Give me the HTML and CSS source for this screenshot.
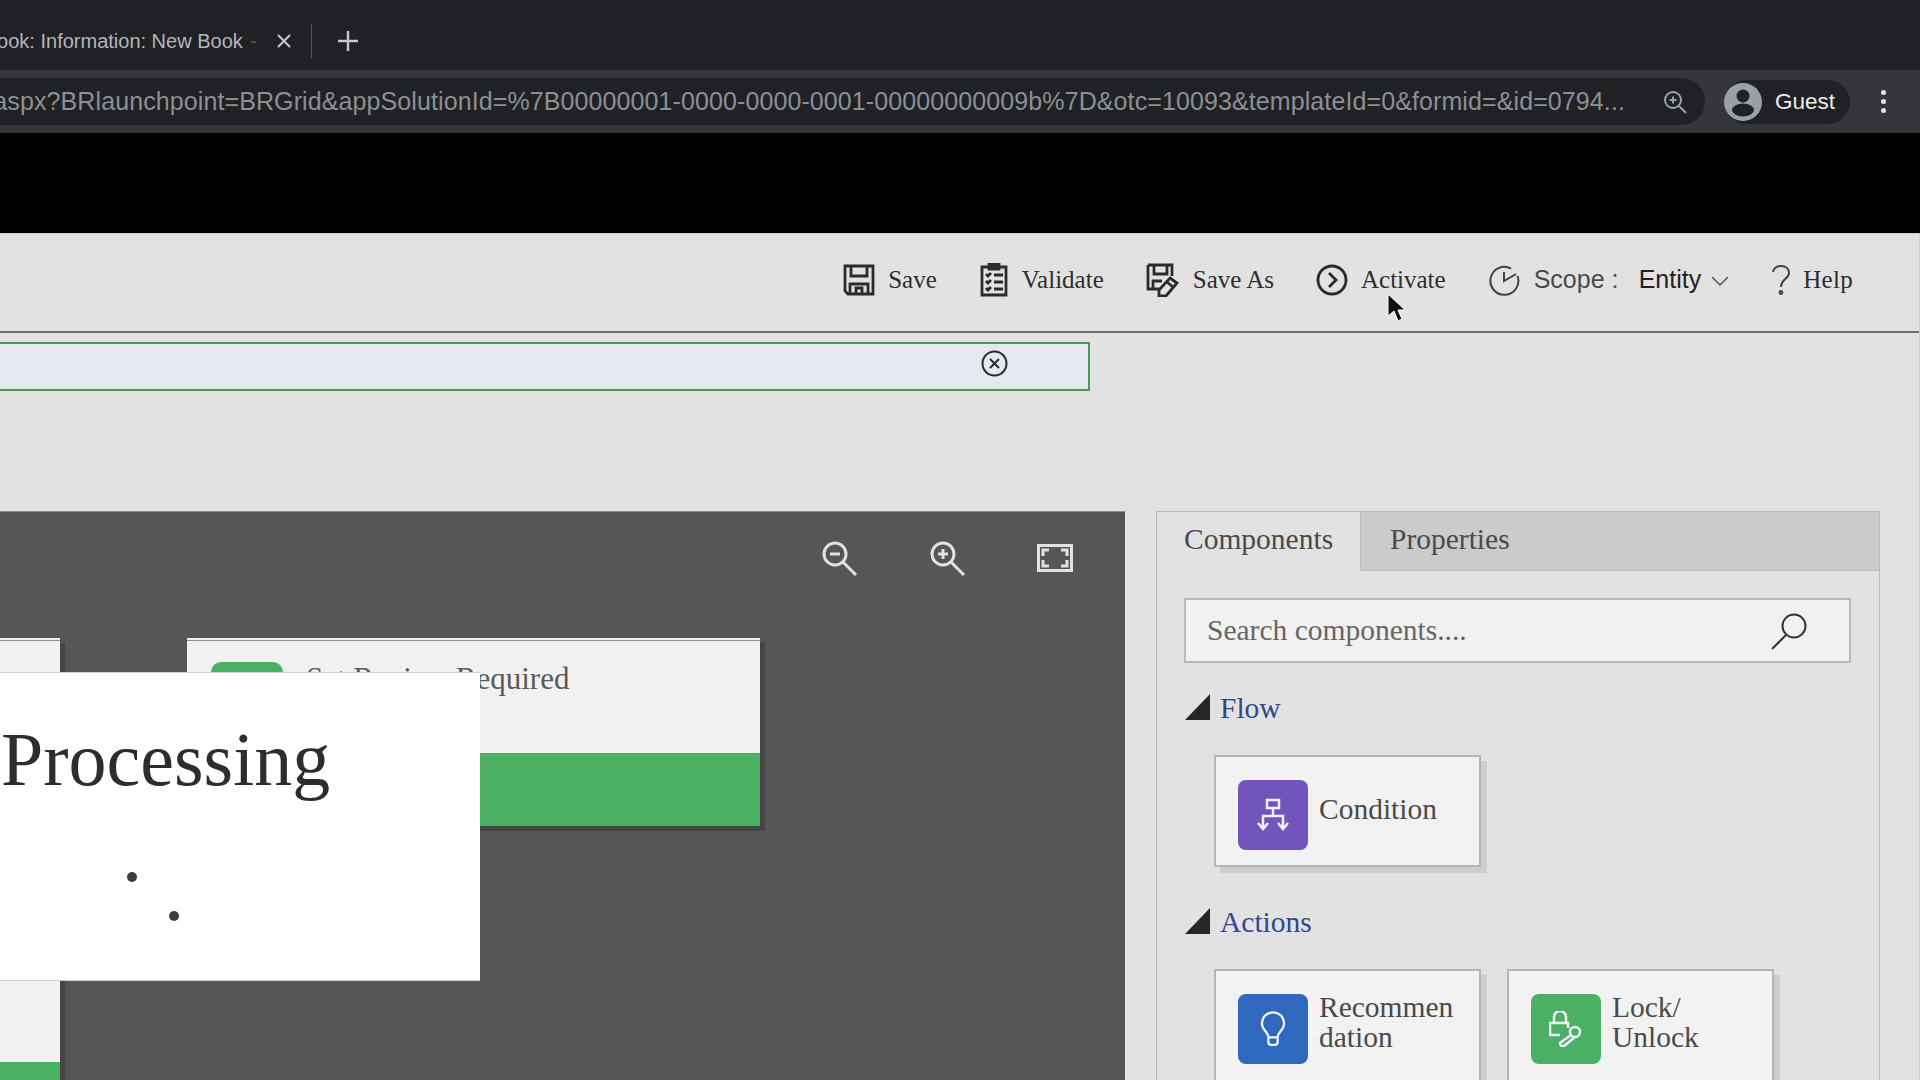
FILE: index.html
```html
<!DOCTYPE html>
<html lang="en">

<head>
    <meta charset="UTF-8">
    <title>Information: New Book</title>
    <link rel="stylesheet" href="styles.css">
</head>

<body>
    <!-- browser chrome -->
    <div class="tabstrip">
        <div class="tab-title"><span>New Book: Information: New Book <em>-</em></span></div>
        <svg class="tab-close" width="16" height="16" viewBox="0 0 16 16"><path d="M2 2l12 12M14 2L2 14" /></svg>
        <div class="tab-divider"></div>
        <svg class="tab-new" width="22" height="22" viewBox="0 0 22 22"><path d="M11 1v20M1 11h20" /></svg>
    </div>
    <div class="browser-bar">
        <div class="url-pill">
            <div class="url-text"><span>main.aspx?BRlaunchpoint=BRGrid&amp;appSolutionId=%7B00000001-0000-0000-0001-00000000009b%7D&amp;otc=10093&amp;templateId=0&amp;formid=&amp;id=0794...</span></div>
            <svg class="url-zoom" width="26" height="26" viewBox="0 0 26 26">
                <circle cx="11" cy="11" r="8" />
                <path d="M17 17l7 7M11 7.5v7M7.5 11h7" />
            </svg>
        </div>
        <div class="profile">
            <svg width="38" height="38" viewBox="0 0 38 38">
                <circle cx="19" cy="19" r="19" fill="#9aa0a6" />
                <circle cx="19" cy="13" r="6.5" fill="#202124" />
                <ellipse cx="19" cy="27" rx="11" ry="6.5" fill="#202124" />
            </svg>
            <span>Guest</span>
        </div>
        <div class="kebab"><i></i><i></i><i></i></div>
    </div>
    <div class="black-band"></div>

    <div class="app">
        <div class="command-bar">
            <div class="command">
                <svg class="cmd-icon" width="32" height="32" viewBox="0 0 32 32">
                    <path d="M2 2h28v28H5l-3-3zM8 2v10h16V2M7 30V20h18v10M13 30v-6h6v6" />
                </svg>
                <span>Save</span>
            </div>
            <div class="command">
                <svg class="cmd-icon" width="30" height="34" viewBox="0 0 30 34">
                    <path d="M3 4h24v28H3zM10 1h10v5H10zM7 11l2 2 3-3M7 18l2 2 3-3M7 25l2 2 3-3M15 12h9M15 19h9M15 26h9" />
                </svg>
                <span>Validate</span>
            </div>
            <div class="command">
                <svg class="cmd-icon" width="34" height="34" viewBox="0 0 34 34">
                    <path d="M2 2h24v11M2 2v24h12M8 2v9h13V2M7 26v-8h9M24 15l7 5-11 13-7 0 0-6zM21 19l6 5" />
                </svg>
                <span>Save As</span>
            </div>
            <div class="command">
                <svg class="cmd-icon" width="32" height="32" viewBox="0 0 32 32">
                    <circle cx="16" cy="16" r="14" />
                    <path d="M13 9l7 7-7 7" />
                </svg>
                <span>Activate</span>
            </div>
            <div class="command scope">
                <svg class="cmd-icon thin" width="32" height="32" viewBox="0 0 32 32">
                    <path d="M23 4.5A14 14 0 1 0 29.5 12M16 8v9l12-7" />
                </svg>
                <span class="scope-label">Scope :</span>
                <span class="scope-value">Entity</span>
                <svg class="chevron" width="18" height="10" viewBox="0 0 18 10"><path d="M1 1l8 8 8-8" /></svg>
            </div>
            <div class="command help">
                <svg class="help-mark" width="20" height="30" viewBox="0 0 20 30">
                    <path d="M2 7c1-4 4-6 8-6 5 0 8 3 8 7 0 6-8 6-8 14" />
                    <circle cx="10" cy="27.5" r="1.4" />
                </svg>
                <span>Help</span>
            </div>
        </div>

        <div class="notice-row">
            <div class="notice">
                <svg class="notice-close" width="27" height="27" viewBox="0 0 27 27">
                    <circle cx="13.5" cy="13.5" r="12" />
                    <path d="M9 9l9 9M18 9l-9 9" />
                </svg>
            </div>
        </div>

        <div class="workspace">
            <div class="canvas">
                <div class="canvas-tools">
                    <svg width="36" height="36" viewBox="0 0 36 36">
                        <circle cx="14" cy="14" r="11" />
                        <path d="M22 22l13 13M9 14h10" />
                    </svg>
                    <svg width="36" height="36" viewBox="0 0 36 36">
                        <circle cx="14" cy="14" r="11" />
                        <path d="M22 22l13 13M9 14h10M14 9v10" />
                    </svg>
                    <svg width="36" height="28" viewBox="0 0 36 28">
                        <path d="M1.5 1.5h33v25h-33zM6 12V6h6M24 6h6v6M30 16v6h-6M12 22H6v-6" />
                    </svg>
                </div>

                <div class="node node-left">
                    <div class="node-band"></div>
                </div>
                <div class="node node-right">
                    <div class="node-head">
                        <div class="node-icon"></div>
                        <span>Set Review Required</span>
                    </div>
                    <div class="node-band"></div>
                </div>

                <div class="processing">
                    <h1>Processing</h1>
                    <i class="dot dot-one"></i>
                    <i class="dot dot-two"></i>
                </div>
            </div>

            <div class="panel">
                <div class="panel-tabs">
                    <div class="panel-tab active">Components</div>
                    <div class="panel-tab">Properties</div>
                </div>
                <div class="panel-body">
                    <div class="search-box">
                        <span>Search components....</span>
                        <svg width="38" height="38" viewBox="0 0 38 38">
                            <circle cx="25" cy="14" r="11.5" />
                            <path d="M17 23L3 37" />
                        </svg>
                    </div>

                    <div class="group-title"><i class="triangle"></i><span>Flow</span></div>
                    <div class="tiles">
                        <div class="tile">
                            <div class="tile-icon purple">
                                <svg width="32" height="34" viewBox="0 0 32 34">
                                    <path d="M10 2h12v8H10zM16 10v8M6 30V18h20v12M1 25l5 6 5-6M21 25l5 6 5-6" />
                                </svg>
                            </div>
                            <span class="tile-text single">Condition</span>
                        </div>
                    </div>

                    <div class="group-title actions"><i class="triangle"></i><span>Actions</span></div>
                    <div class="tiles">
                        <div class="tile tall">
                            <div class="tile-icon blue">
                                <svg width="26" height="38" viewBox="0 0 28 38">
                                    <path d="M9 28c0-6-7-8-7-15a12 12 0 0 1 24 0c0 7-7 9-7 15zM9 28v5a3 3 0 0 0 3 3h4a3 3 0 0 0 3-3v-5" />
                                </svg>
                            </div>
                            <span class="tile-text">Recommen<br>dation</span>
                        </div>
                        <div class="tile tall">
                            <div class="tile-icon green">
                                <svg width="34" height="36" viewBox="0 0 34 36">
                                    <path d="M19 17V12H1v12h10M5 12V6a6 6 0 0 1 12 0v6M22 24L11 32l1 3 3 0 11-9" />
                                    <circle cx="26" cy="21" r="5" />
                                </svg>
                            </div>
                            <span class="tile-text">Lock/<br>Unlock</span>
                        </div>
                    </div>
                </div>
            </div>
        </div>

        <svg class="cursor" width="18" height="29" viewBox="0 0 18 29">
            <path d="M1 1v22l6-5 4 10 4-2-4-9h7z" />
        </svg>
    </div>
</body>

</html>
```

FILE: styles.css
```css
html,
body {
    margin: 0;
    padding: 0;
    height: 1080px;
    overflow: hidden;
    background: #e2e2e2;
    font-family: "Liberation Serif", serif;
}

/* browser chrome */
.tabstrip {
    display: flex;
    align-items: center;
    height: 70px;
    box-sizing: border-box;
    padding-top: 12px;
    background: #202124;
}

.tab-title {
    display: flex;
    justify-content: flex-end;
    width: 257px;
    overflow: hidden;
    white-space: nowrap;
    color: #b4b6b8;
    font-family: "Liberation Sans", sans-serif;
    font-size: 20px;
}

.tab-title span {
    flex: none;
}

.tab-title em {
    margin-left: 2px;
    color: #55575a;
    font-style: normal;
}

.tab-close {
    margin-left: 19px;
    fill: none;
    stroke: #c4c6c8;
    stroke-width: 2;
}

.tab-divider {
    width: 1px;
    height: 34px;
    margin-left: 19px;
    background: #55575a;
}

.tab-new {
    margin-left: 25px;
    fill: none;
    stroke: #c4c6c8;
    stroke-width: 2.5;
}

.browser-bar {
    display: flex;
    align-items: center;
    height: 63px;
    background: #35363a;
}

.url-pill {
    display: flex;
    align-items: center;
    flex: none;
    width: 1705px;
    height: 47px;
    box-sizing: border-box;
    background: #202124;
    border-radius: 0 24px 24px 0;
}

.url-text {
    display: flex;
    justify-content: flex-end;
    width: 1625px;
    overflow: hidden;
    white-space: nowrap;
    color: #8d8f92;
    font-family: "Liberation Sans", sans-serif;
    font-size: 25px;
    letter-spacing: 0.1px;
}

.url-text span {
    flex: none;
}

.url-zoom {
    margin-left: 37px;
    fill: none;
    stroke: #9aa0a6;
    stroke-width: 2;
}

.profile {
    display: flex;
    align-items: center;
    width: 126px;
    height: 44px;
    margin-left: 19px;
    background: #202124;
    border-radius: 22px;
    color: #e8eaed;
    font-family: "Liberation Sans", sans-serif;
    font-size: 22.5px;
}

.profile span {
    margin-left: 13px;
}

.kebab {
    display: flex;
    flex-direction: column;
    gap: 4px;
    margin-left: 31px;
}

.kebab i {
    display: block;
    width: 5px;
    height: 5px;
    border-radius: 50%;
    background: #dfe1e4;
}

.black-band {
    height: 100px;
    background: #000;
}

/* page */
.app {
    position: relative;
    height: 847px;
    border-right: 1px solid #cfcfcf;
    border-top: 1px solid #d0d0d0;
    box-sizing: border-box;
}

.command-bar {
    display: flex;
    justify-content: flex-end;
    align-items: center;
    gap: 42px;
    height: 99px;
    box-sizing: border-box;
    padding: 0 66px 6px 0;
    border-bottom: 2px solid #6f6f6f;
    color: #2e2e2e;
    font-size: 25px;
}

.command {
    display: flex;
    align-items: center;
    gap: 13px;
}

.cmd-icon {
    fill: none;
    stroke: #2b2b2b;
    stroke-width: 2.8;
}

.cmd-icon.thin {
    stroke: #444;
    stroke-width: 2;
}

.scope {
    font-family: "Liberation Sans", sans-serif;
    font-size: 25px;
    gap: 14px;
}

.scope-label {
    color: #4a4a4a;
    width: 91px;
}

.scope-value {
    color: #222;
}

.chevron {
    margin: 2px 0 0 -4px;
    fill: none;
    stroke: #555;
    stroke-width: 1.5;
}

.help {
    margin-left: 0;
    gap: 12px;
}

.help span {
    letter-spacing: 0.3px;
}

.help-mark {
    fill: none;
    stroke: #444;
    stroke-width: 2;
}

.notice-row {
    padding-top: 9px;
    height: 178px;
    box-sizing: border-box;
}

.notice {
    display: flex;
    justify-content: flex-end;
    width: 1092px;
    height: 49px;
    box-sizing: border-box;
    padding: 6px 80px 0 0;
    margin-left: -2px;
    background: #e6e8f0;
    border: 2px solid #4d9a58;
}

.notice-close {
    fill: none;
    stroke: #2b2b2b;
    stroke-width: 2;
}

.workspace {
    display: flex;
    gap: 31px;
    height: 569px;
    padding-right: 39px;
}

/* canvas */
.canvas {
    position: relative;
    width: 1125px;
    flex: none;
    overflow: hidden;
    background: #565656;
    border-top: 1px solid #8b8b8b;
    box-sizing: border-box;
}

.canvas-tools {
    position: absolute;
    top: 28px;
    left: 821px;
    display: flex;
    align-items: center;
    gap: 72px;
}

.canvas-tools svg {
    fill: none;
    stroke: #e2e2e2;
    stroke-width: 3;
}

.node {
    position: absolute;
    display: flex;
    flex-direction: column;
    background: #f1f1f1;
    border-top: 3px solid #f1f1f1;
    box-shadow: 5px 5px 0 #454545;
}

.node::before {
    content: "";
    position: absolute;
    left: 0;
    right: 0;
    top: -1px;
    height: 1px;
    background: #8f8f8f;
}

.node-left {
    top: 126px;
    left: -20px;
    width: 80px;
    height: 560px;
}

.node-left .node-band {
    flex: none;
    margin-top: 421px;
    height: 140px;
}

.node-right {
    top: 126px;
    left: 187px;
    width: 573px;
    height: 185px;
}

.node-head {
    display: flex;
    gap: 23px;
    height: 112px;
    box-sizing: border-box;
    padding: 21px 0 0 24px;
    color: #5a5a5a;
    font-size: 31px;
    line-height: 34px;
}

.node-icon {
    width: 72px;
    height: 72px;
    border-radius: 10px;
    background: #4bb063;
}

.node-band {
    flex: 1;
    background: #4cb063;
}

.processing {
    position: absolute;
    top: 160px;
    left: 0;
    width: 480px;
    height: 309px;
    background: #fff;
    border-top: 1px solid #cfcfcf;
    border-bottom: 1px solid #cfcfcf;
    box-sizing: border-box;
}

.processing h1 {
    margin: 0;
    padding: 41px 0 0 1px;
    color: #2d2d2d;
    font-size: 76px;
    font-weight: normal;
    line-height: 90px;
}

.dot {
    position: absolute;
    width: 10px;
    height: 10px;
    border-radius: 50%;
    background: #3c3c3c;
}

.dot-one {
    top: 199px;
    left: 127px;
}

.dot-two {
    top: 238px;
    left: 169px;
}

/* right panel */
.panel {
    flex: 1;
    border: 1px solid #bdbdbd;
    border-bottom: 0;
}

.panel-tabs {
    display: flex;
    height: 59px;
    background: #cbcbcb;
    border-bottom: 1px solid #bdbdbd;
    box-sizing: border-box;
}

.panel-tab {
    padding: 11px 28px 0 29px;
    color: #4a4a4a;
    font-size: 29.5px;
}

.panel-tab.active {
    width: 204px;
    padding-left: 27px;
    margin-bottom: -1px;
    background: #e2e2e2;
    border-right: 1px solid #bdbdbd;
    box-sizing: border-box;
}

.panel-body {
    padding: 27px 28px 0 27px;
}

.search-box {
    display: flex;
    align-items: center;
    justify-content: space-between;
    height: 65px;
    box-sizing: border-box;
    padding: 0 42px 0 21px;
    background: #f1f1f1;
    border: 2px solid #b9b9b9;
    color: #666;
    font-size: 29.5px;
}

.search-box svg {
    fill: none;
    stroke: #333;
    stroke-width: 2;
}

.group-title {
    display: flex;
    align-items: flex-end;
    gap: 10px;
    margin-top: 28px;
    color: #31488c;
    font-size: 29.5px;
    line-height: 34px;
}

.triangle {
    display: block;
    width: 25px;
    height: 26px;
    margin: 0 0 5px 1px;
    background: #262626;
    clip-path: polygon(100% 0, 100% 100%, 0 100%);
}

.group-title.actions {
    margin-top: 38px;
}

.tiles {
    display: flex;
    gap: 26px;
    margin: 30px 0 0 30px;
}

.tile {
    display: flex;
    gap: 11px;
    width: 267px;
    height: 112px;
    box-sizing: border-box;
    padding: 23px 0 0 22px;
    background: #f2f2f2;
    border: 2px solid #b5b5b5;
    box-shadow: 6px 6px 0 #cdcdcd;
    color: #4a4a4a;
    font-size: 29.5px;
    line-height: 30px;
}

.tile.tall {
    height: 140px;
}

.tile-icon {
    display: flex;
    align-items: center;
    justify-content: center;
    flex: none;
    width: 70px;
    height: 70px;
    border-radius: 8px;
}

.tile-icon svg {
    fill: none;
    stroke: #eef0fa;
    stroke-width: 2.5;
}

.purple {
    background: #7155bb;
}

.blue {
    background: #2f69bd;
}

.green {
    background: #4bb063;
}

.tile-text {
    margin-top: -2px;
}

.tile-text.single {
    margin-top: 0;
    padding-top: 14px;
}

.cursor {
    position: absolute;
    top: 59px;
    left: 1387px;
    fill: #111;
    stroke: #fff;
    stroke-width: 1;
}
```
